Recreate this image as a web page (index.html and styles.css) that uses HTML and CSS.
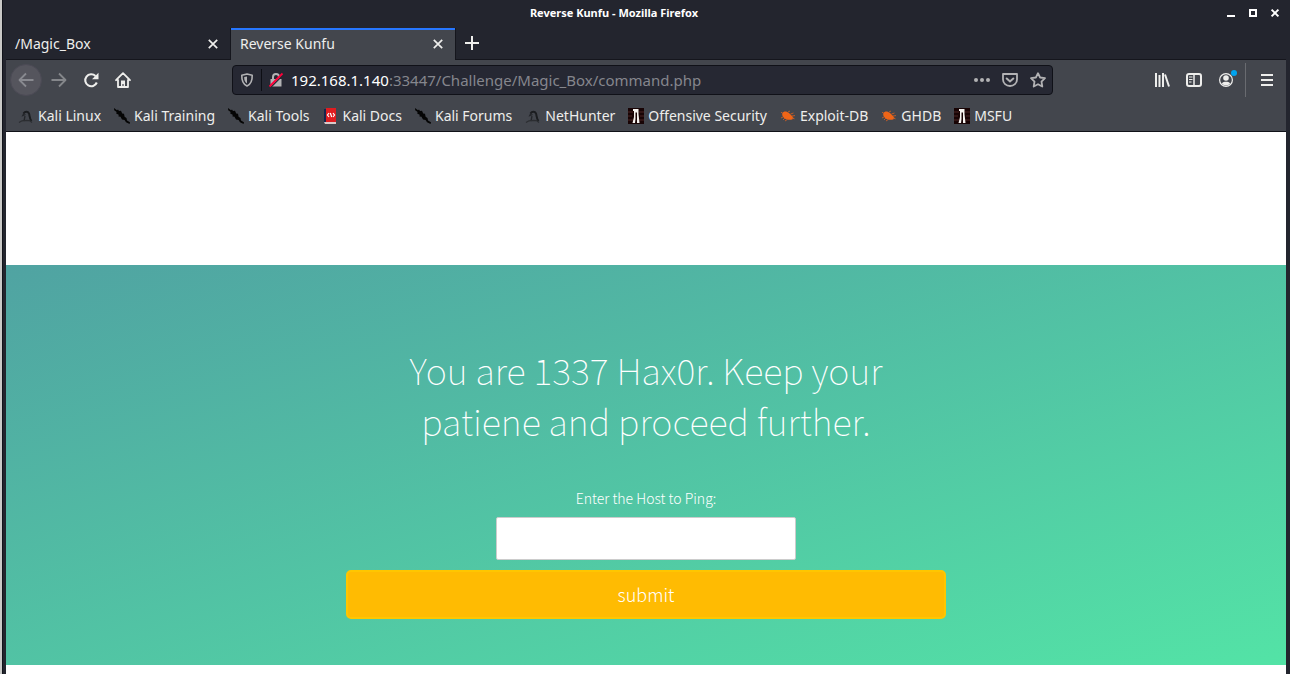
FILE: index.html
```html
<!DOCTYPE html>
<html lang="en">
<head>
<meta charset="utf-8">
<title>Reverse Kunfu</title>
<link rel="stylesheet" href="styles.css">
</head>
<body>
<svg class="defs" aria-hidden="true">
  <symbol id="close" viewBox="0 0 10 10"><path d="M.8.8l8.4 8.4M9.2.8L.8 9.2" stroke="currentColor" stroke-width="1.7"/></symbol>
  <symbol id="dragon" viewBox="0 0 16 16"><path d="M5.500 5.500C7 3.200 9.800 3 11 5.500c.8 2 .3 5 2.500 7.500" fill="none" stroke="#1b1d20" stroke-width="2"/><path d="M6 5 4.800 7.500l2.700-1M7 8 6 13" fill="none" stroke="#24262a" stroke-width="1.300"/><path d="M1 14.500 4 12.800l4.500-.4 3 .2 2.500 1.900" fill="none" stroke="#2b2d31" stroke-width="1.300"/></symbol>
  <symbol id="knife" viewBox="0 0 16 16"><path d="M0 0l3 2.200 1-.7 1 1.500 2-.2 1.200 2.700 1.800.3.600 3 1.900 1.300.5 2.500 3 1.700-.4 1.700-3.600-1.800-1.400-2.300-2.600-.5-1.500-2.600-2-.2.200-1.800-2.500-1.200.4-1.700L.2 2.200z" fill="#050505"/></symbol>
  <symbol id="docs" viewBox="0 0 16 16"><path d="M2 1h2v14H2z" fill="#17254d"/><path d="M4 0h10v14H4z" fill="#df1c20"/><path d="M2 14h12v2H3z" fill="#d9c9c9"/><path d="M7 5L5.500 7 7 9m4-4l1.500 2L11 9M8.300 5l1.400 4" fill="none" stroke="#fff" stroke-width="1.200"/></symbol>
  <symbol id="offsec" viewBox="0 0 16 16"><path d="M0 0h16v16H0z" fill="#180405"/><path d="M0 4h5M0 8h4M0 12h5M11 4h5M12 8h4M11 12h5" stroke="#4b2424" stroke-width="1.200"/><path d="M5 1h5.500v5l1 9H9V4.500H7.500V11L7 15H4.500L6 9V3H5z" fill="#f5f2ef"/></symbol>
  <symbol id="bug" viewBox="0 0 16 16"><path d="M2 5c2-2 4.500-2.200 7 0l3 3 1.500 2-1.300 1.500C8.500 12.500 4.500 11.500 2.500 8z" fill="#f06517"/><path d="M8 4l2-1M10.500 6l3-1M12 8l3-.4M12 10l2.500.8M3 9l-2 1M5 10l-2 2M8 11l-3 2M3 6L1 4" stroke="#bd5b28" stroke-width="1"/></symbol>
</svg>
<div class="window">
  <header class="titlebar">
    <span class="window-title">Reverse Kunfu - Mozilla Firefox</span>
    <div class="window-buttons">
      <button aria-label="Minimize"><svg width="8" height="8"><path d="M0 6h8v2H0z" fill="#fff"/></svg></button>
      <button aria-label="Maximize"><svg width="8" height="8"><path d="M1 1h6v6H1z" fill="none" stroke="#fff" stroke-width="2"/></svg></button>
      <button aria-label="Close window"><svg width="8" height="8"><path d="M.6.6l6.800 6.800M7.400.6.6 7.400" stroke="#fff" stroke-width="2"/></svg></button>
    </div>
  </header>
  <div class="tabs">
    <div class="tab"><span>/Magic_Box</span><button aria-label="Close tab"><svg width="10" height="10"><use href="#close"/></svg></button></div>
    <div class="tab active"><span>Reverse Kunfu</span><button aria-label="Close tab"><svg width="10" height="10"><use href="#close"/></svg></button></div>
    <button class="new-tab" aria-label="New tab"><svg width="14" height="14"><path d="M7 0v14M0 7h14" stroke="currentColor" stroke-width="2"/></svg></button>
  </div>
  <nav class="toolbar" aria-label="Navigation">
    <div class="nav-buttons">
      <button class="back" aria-label="Back"><svg width="16" height="16"><path d="M15.500 8H1.500M8 1.500 1.500 8 8 14.500" fill="none" stroke="currentColor" stroke-width="1.800" stroke-linejoin="round"/></svg></button>
      <button class="dim" aria-label="Forward"><svg width="16" height="16"><path d="M.5 8h14M8 1.500 14.500 8 8 14.500" fill="none" stroke="currentColor" stroke-width="1.800" stroke-linejoin="round"/></svg></button>
      <button aria-label="Reload"><svg width="16" height="16"><path d="M13.800 10.500A6 6 0 1 1 12.500 4" fill="none" stroke="currentColor" stroke-width="2.100"/><path d="M15.500.8v6.500H9z" fill="currentColor"/></svg></button>
      <button aria-label="Home"><svg width="16" height="16"><path d="M1 8.200 8 1.200l7 7M3 8V15h10V8" fill="none" stroke="currentColor" stroke-width="1.800" stroke-linejoin="round" stroke-linecap="round"/><path d="M6 8.500h4V15H8.600v-3H7.400v3H6z" fill="currentColor"/></svg></button>
    </div>
    <div class="urlbar">
      <svg class="shield" width="14" height="14" viewBox="0 0 14 14"><path d="M7 1l5.200 1.200c.2 4.900-.9 8.700-5.200 10.800C2.700 10.900 1.600 7.100 1.800 2.200z" fill="none" stroke="currentColor" stroke-width="1.600" stroke-linejoin="round"/><path d="M7 3.400v7.200C4.700 9 4.100 7 4.200 4z" fill="currentColor"/></svg>
      <svg class="lock" width="16" height="16" viewBox="0 0 16 16"><path d="M5 8V5c0-4 6-4 6 0v3" fill="none" stroke="currentColor" stroke-width="2"/><path d="M2.500 7h11v7.500h-11z" fill="currentColor"/><path d="M2.500 15.500 15 3" stroke="#262833" stroke-width="1.500"/><path d="M1.500 14.500 14.500 1.500" stroke="#ff0039" stroke-width="1.800"/></svg>
      <div class="url"><span class="host">192.168.1.140</span>:33447/Challenge/Magic_Box/command.php</div>
      <button aria-label="Page actions"><svg width="16" height="16"><circle cx="2" cy="8" r="2" fill="currentColor"/><circle cx="8" cy="8" r="2" fill="currentColor"/><circle cx="14" cy="8" r="2" fill="currentColor"/></svg></button>
      <button aria-label="Save to Pocket"><svg width="16" height="16"><path d="M1 2h14v5.500a7 6.500 0 0 1-14 0z" fill="none" stroke="currentColor" stroke-width="1.800" stroke-linejoin="round"/><path d="M4.700 6.500 8 9.500l3.300-3" fill="none" stroke="currentColor" stroke-width="2" stroke-linecap="round"/></svg></button>
      <button aria-label="Bookmark"><svg width="16" height="16"><path d="M8 1.200 10.100 5.500l4.900.7-3.500 3.400.8 4.900L8 12.200l-4.300 2.300.8-4.900L1 6.200l4.900-.7z" fill="none" stroke="currentColor" stroke-width="1.800" stroke-linejoin="round"/></svg></button>
    </div>
    <div class="tools">
      <button aria-label="Library"><svg width="16" height="16"><path d="M2 1v14M5.500 3v12M9 1v14M11 2.500 15 14.500" stroke="currentColor" stroke-width="2"/></svg></button>
      <button aria-label="Sidebars"><svg width="16" height="16"><rect x="1" y="2" width="14" height="12" rx="2" fill="none" stroke="currentColor" stroke-width="2"/><path d="M8 2v12" stroke="currentColor" stroke-width="1.500"/><path d="M3 5h3.500M3 7.500h3.500M3 10h2.500" stroke="currentColor"/></svg></button>
      <button class="account" aria-label="Account"><svg width="18" height="16"><circle cx="7" cy="8" r="6.400" fill="none" stroke="currentColor" stroke-width="1.200"/><circle cx="7" cy="6" r="2.800" fill="currentColor"/><path d="M2.800 11.500Q4 9.200 7 9.800q3-.6 4.200 1.700A5.500 5.500 0 0 1 2.800 11.500z" fill="currentColor"/><circle cx="15" cy="1" r="3" fill="#00a4ef"/></svg></button>
      <button class="menu" aria-label="Open menu"><svg width="12" height="12"><path d="M0 1h12M0 6h12M0 11h12" stroke="currentColor" stroke-width="2"/></svg></button>
    </div>
  </nav>
  <nav class="bookmarks" aria-label="Bookmarks">
    <a href="#"><svg><use href="#dragon"/></svg>Kali Linux</a>
    <a href="#"><svg><use href="#knife"/></svg>Kali Training</a>
    <a href="#"><svg><use href="#knife"/></svg>Kali Tools</a>
    <a href="#"><svg><use href="#docs"/></svg>Kali Docs</a>
    <a href="#"><svg><use href="#knife"/></svg>Kali Forums</a>
    <a href="#"><svg><use href="#dragon"/></svg>NetHunter</a>
    <a href="#"><svg><use href="#offsec"/></svg>Offensive Security</a>
    <a href="#"><svg><use href="#bug"/></svg>Exploit-DB</a>
    <a href="#"><svg><use href="#bug"/></svg>GHDB</a>
    <a href="#"><svg><use href="#offsec"/></svg>MSFU</a>
  </nav>
  <main class="page">
    <section class="hero">
      <h1>You are 1337 Hax0r. Keep your patiene and proceed further.</h1>
      <form>
        <label for="host">Enter the Host to Ping:</label>
        <input id="host" type="text">
        <button type="button">submit</button>
      </form>
    </section>
  </main>
</div>
</body>
</html>
```
FILE: styles.css
```css
* { box-sizing: border-box; }
body {
  margin: 0;
  min-height: 100vh;
  padding-left: 2px;
  background: #c9c9c7;
  font: 14px/20px "Noto Sans", sans-serif;
  color: #eeeeec;
}
button { padding: 0; border: 0; background: none; color: inherit; font: inherit; display: grid; place-items: center; }
svg { display: block; overflow: visible; }
.defs { position: absolute; width: 0; height: 0; }
.window {
  min-height: 100vh;
  display: flex;
  flex-direction: column;
  background: #23252e;
  border-left: 1px solid #11131a;
  padding: 0 4px 0 3px;
}
.titlebar { display: grid; grid-template-columns: 1fr auto 1fr; align-items: center; height: 28px; padding-bottom: 2px; }
.window-title { grid-column: 2; padding-right: 64px; font: 700 11px/24px "Noto Sans", sans-serif; color: #fff; }
.window-buttons { display: flex; justify-content: flex-end; gap: 14px; padding-right: 7px; }
.tabs { display: flex; height: 32px; border-bottom: 1px solid #15161d; }
.tab { width: 224px; height: 32px; display: flex; align-items: center; justify-content: space-between; padding: 0 12px 0 9px; }
.tab.active { width: 226px; background: #43464d; border: solid #15161d; border-width: 0 1px; box-shadow: inset 0 2px #2777ff; }
.new-tab { width: 32px; padding-bottom: 1px; }
.toolbar { display: flex; align-items: center; height: 40px; background: #43464d; }
.nav-buttons { display: flex; align-items: center; flex: none; width: 226px; padding-left: 4px; }
.nav-buttons button { width: 32px; height: 32px; }
.nav-buttons .back { border: 1px solid #4b4a55; border-radius: 50%; background: #55555d; color: #898a90; }
.nav-buttons .dim { width: 33px; color: #85878b; }
.urlbar {
  display: flex;
  align-items: center;
  flex: 0 1 821px;
  height: 30px;
  border: 1px solid #101118;
  border-radius: 4px;
  background: #262833;
  color: #b2b2b4;
  padding: 0 0 0 7px;
}
.shield { flex: none; }
.lock { flex: none; box-sizing: content-box; margin-left: 7px; padding: 3px 7px 3px 6px; border-left: 1px solid #0d0e14; }
.url { flex: 1; font-size: 15px; color: #85868d; white-space: nowrap; }
.host { color: #fff; }
.urlbar button { width: 28px; height: 28px; }
.tools { display: flex; align-items: center; margin-left: auto; }
.tools button { width: 32px; height: 34px; }
.tools .account { width: 36px; border-right: 1px solid #696b70; }
.tools .menu { width: 40px; padding-left: 2px; }
.bookmarks { display: flex; gap: 13px; height: 32px; padding: 0 0 0 12px; background: #43464d; border-bottom: 1px solid #101118; }
.bookmarks a { display: flex; align-items: center; gap: 4px; color: inherit; text-decoration: none; white-space: nowrap; }
.bookmarks svg { width: 16px; height: 16px; flex: none; }
.page { flex: 1; background: #fff; padding: 133px 0 9px; }
.hero {
  min-height: 400px;
  padding: 79px 20px 46px;
  background: linear-gradient(to bottom right, #50a3a2 0%, #53e3a6 100%);
  font-family: "Noto Sans CJK SC", Lato, sans-serif;
  font-weight: 200;
  color: #fff;
}
h1 { max-width: 500px; margin: 0 auto 40px; font-size: 36px; line-height: 51px; font-weight: 100; text-align: center; }
form { max-width: 600px; margin: 0 auto; display: flex; flex-direction: column; align-items: center; }
form label { font-size: 14px; line-height: 24px; margin-bottom: 7px; }
form input { width: 50%; height: 43px; border: 1px solid #ccc; border-radius: 2px; background: #fff; padding: 8px; font: inherit; }
form button { width: 100%; height: 49px; margin-top: 10px; padding-bottom: 2px; border: 2px solid #ffc600; border-radius: 5px; background: #ffbb02; color: #fff; font-size: 18px; }
```
